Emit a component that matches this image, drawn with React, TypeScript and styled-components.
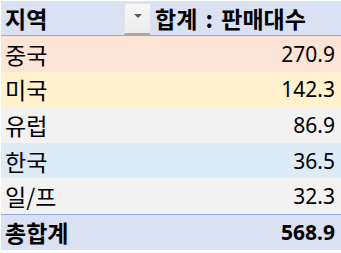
import React from 'react'
import styled, { createGlobalStyle } from 'styled-components'

const GlobalStyle = createGlobalStyle`
  html, body {
    margin: 0;
    padding: 0;
    background: #ffffff;
  }
  body {
    font-family: "Noto Sans CJK KR", sans-serif;
  }
`

type Row = { region: string; value: string; tone: string }

const rows: Row[] = [
  { region: '중국', value: '270.9', tone: '#fce4d6' },
  { region: '미국', value: '142.3', tone: '#fff2cc' },
  { region: '유럽', value: '86.9', tone: '#f2f2f2' },
  { region: '한국', value: '36.5', tone: '#ddebf7' },
  { region: '일/프', value: '32.3', tone: '#f2f2f2' },
]

const App: React.FC = () => {
  return (
    <>
      <GlobalStyle />
      <Pivot>
        <HeaderRow>
          <HeaderLabel>
            <span>지역</span>
            <FilterButton aria-label="filter">
              <Caret />
            </FilterButton>
          </HeaderLabel>
          <HeaderValue>합계 : 판매대수</HeaderValue>
        </HeaderRow>
        {rows.map((row) => (
          <DataRow key={row.region} tone={row.tone}>
            <RegionCell>{row.region}</RegionCell>
            <ValueCell>{row.value}</ValueCell>
          </DataRow>
        ))}
        <TotalRow>
          <RegionCell>총합계</RegionCell>
          <ValueCell>568.9</ValueCell>
        </TotalRow>
      </Pivot>
    </>
  )
}

export default App

const Pivot = styled.div`
  display: flex;
  flex-direction: column;
  margin: 1px 0 0 1px;
  width: 340px;
  font-size: 23px;
  color: #000;
`

const HeaderRow = styled.div`
  display: grid;
  grid-template-columns: 151px 1fr;
  height: 34px;
  background: #d9e1f2;
  border-bottom: 1px solid #8ea9db;
  font-weight: 700;
`

const HeaderLabel = styled.div`
  display: flex;
  align-items: center;
  justify-content: space-between;
  padding: 0 2px 0 4px;
`

const HeaderValue = styled.div`
  display: flex;
  align-items: center;
  padding-left: 3px;
  white-space: pre;
  word-spacing: 3px;
`

const FilterButton = styled.div`
  box-sizing: border-box;
  width: 26px;
  height: 31px;
  margin-top: 3px;
  display: flex;
  align-items: center;
  justify-content: center;
  padding-bottom: 5px;
  background: linear-gradient(#f7f7f7, #ececec);
  border-left: 1px solid #e4e4e4;
  border-bottom: 2px solid #a9a9a9;
`

const Caret = styled.span`
  width: 0;
  height: 0;
  border-left: 4px solid transparent;
  border-right: 4px solid transparent;
  border-top: 4px solid #5a5a5a;
`

const DataRow = styled.div<{ tone: string }>`
  display: flex;
  align-items: center;
  justify-content: space-between;
  height: 35.6px;
  background: ${({ tone }) => tone};
`

const TotalRow = styled.div`
  display: flex;
  align-items: center;
  justify-content: space-between;
  height: 35px;
  background: #d9e1f2;
  border-top: 1px solid #8ea9db;
  font-weight: 700;
`

const RegionCell = styled.span`
  padding-left: 4px;
`

const ValueCell = styled.span`
  padding-right: 6px;
  font-family: "Noto Sans", sans-serif;
  font-size: 21px;
`
